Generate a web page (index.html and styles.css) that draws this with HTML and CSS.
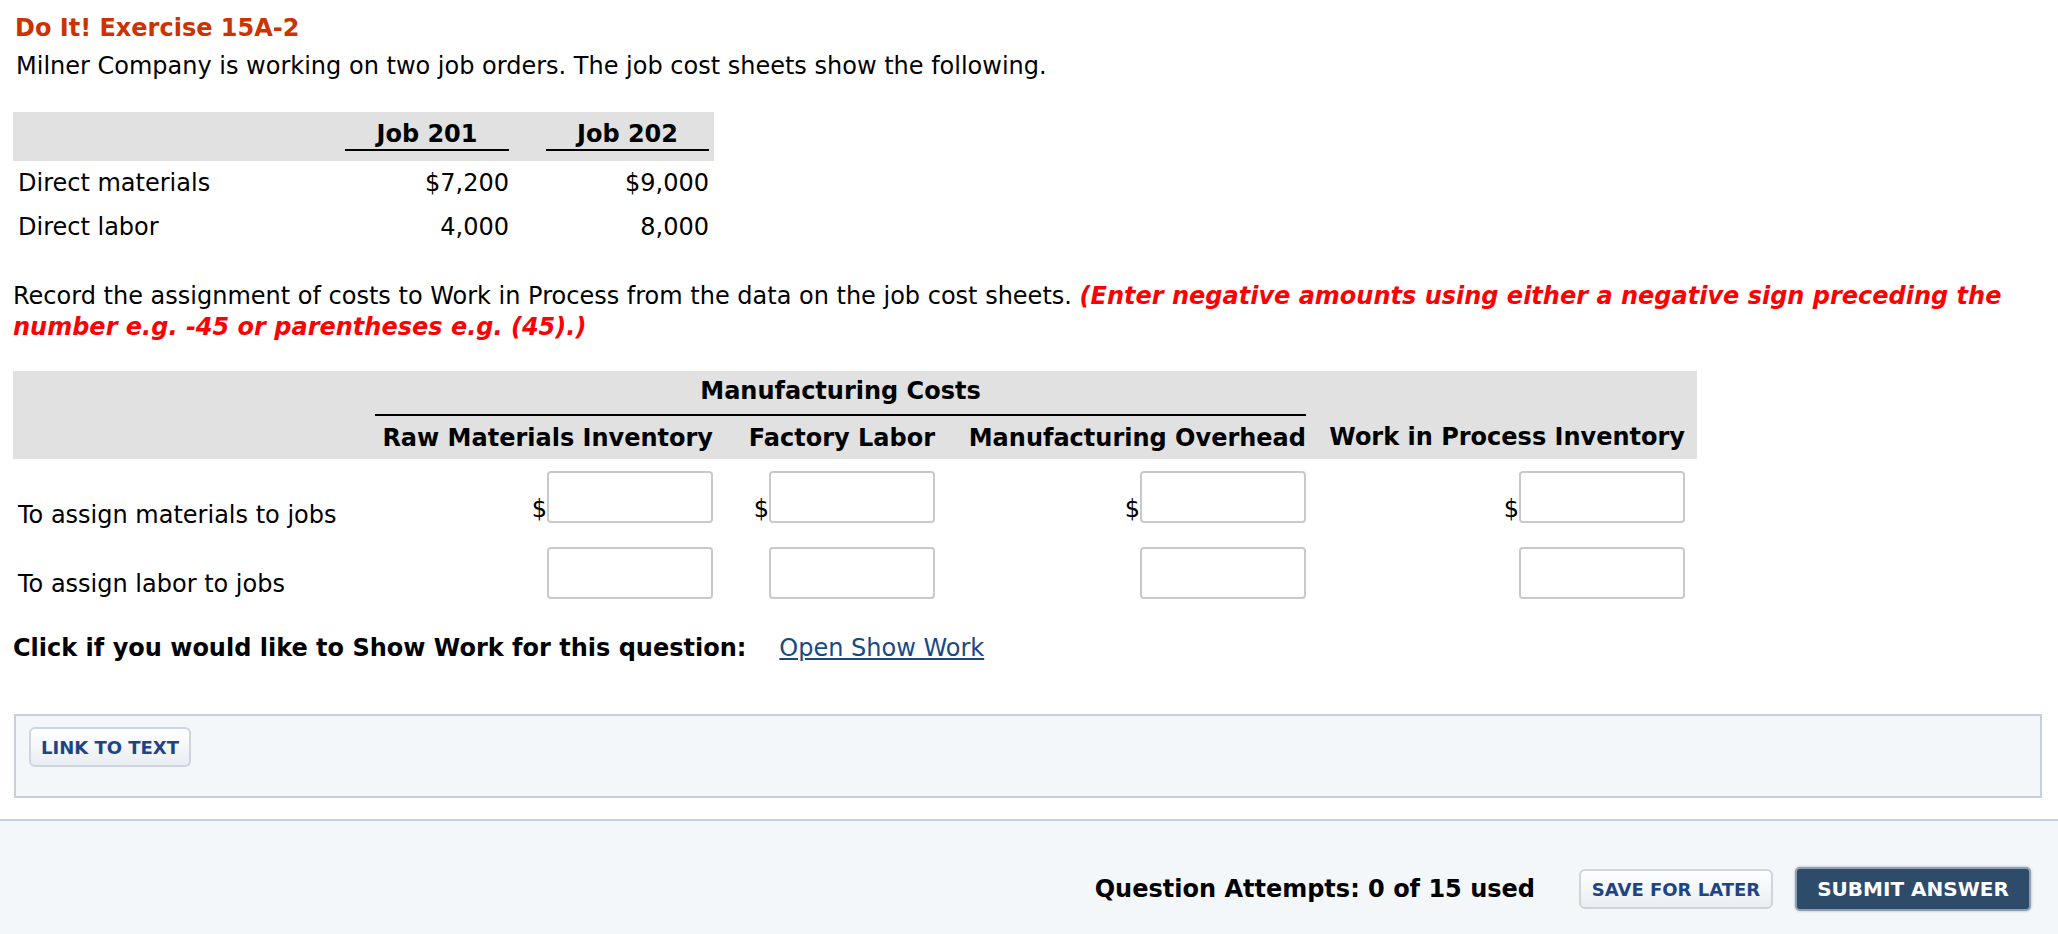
FILE: index.html
```html
<!DOCTYPE html>
<html lang="en">
<head>
<meta charset="utf-8">
<title>Do It! Exercise 15A-2</title>
<link rel="stylesheet" href="styles.css">
</head>
<body>
<div class="page">
  <h1 class="title">Do It! Exercise 15A-2</h1>
  <p class="intro">Milner Company is working on two job orders. The job cost sheets show the following.</p>

  <table class="jobs">
    <colgroup>
      <col class="c-lbl"><col class="c-j1"><col class="c-gap"><col class="c-j2"><col class="c-end">
    </colgroup>
    <thead>
      <tr class="hrow">
        <th></th>
        <th><div class="uline">Job 201</div></th>
        <th></th>
        <th><div class="uline">Job 202</div></th>
        <th></th>
      </tr>
    </thead>
    <tbody>
      <tr>
        <td class="lbl">Direct materials</td>
        <td class="num">$7,200</td>
        <td></td>
        <td class="num">$9,000</td>
        <td></td>
      </tr>
      <tr>
        <td class="lbl">Direct labor</td>
        <td class="num">4,000</td>
        <td></td>
        <td class="num">8,000</td>
        <td></td>
      </tr>
    </tbody>
  </table>

  <p class="instr">Record the assignment of costs to Work in Process from the data on the job cost sheets. <em class="warn">(Enter negative amounts using either a negative sign preceding the number e.g. -45 or parentheses e.g. (45).)</em></p>

  <table class="mfg">
    <colgroup>
      <col class="m-lbl"><col class="m-c1"><col class="m-c2"><col class="m-c3"><col class="m-c4"><col class="m-end">
    </colgroup>
    <thead>
      <tr class="grp">
        <th></th>
        <th colspan="3" class="grp-h">Manufacturing Costs</th>
        <th></th>
        <th></th>
      </tr>
      <tr class="cols">
        <th></th>
        <th>Raw Materials Inventory</th>
        <th>Factory Labor</th>
        <th>Manufacturing Overhead</th>
        <th>Work in Process Inventory</th>
        <th></th>
      </tr>
    </thead>
    <tbody>
      <tr>
        <td class="rlbl rlbl-1">To assign materials to jobs</td>
        <td class="cell"><div class="money"><span class="cur">$</span><input class="amt" type="text"></div></td>
        <td class="cell"><div class="money"><span class="cur">$</span><input class="amt" type="text"></div></td>
        <td class="cell"><div class="money"><span class="cur">$</span><input class="amt" type="text"></div></td>
        <td class="cell"><div class="money"><span class="cur">$</span><input class="amt" type="text"></div></td>
        <td></td>
      </tr>
      <tr>
        <td class="rlbl rlbl-2">To assign labor to jobs</td>
        <td class="cell"><div class="money"><input class="amt" type="text"></div></td>
        <td class="cell"><div class="money"><input class="amt" type="text"></div></td>
        <td class="cell"><div class="money"><input class="amt" type="text"></div></td>
        <td class="cell"><div class="money"><input class="amt" type="text"></div></td>
        <td></td>
      </tr>
    </tbody>
  </table>

  <p class="showwork"><strong>Click if you would like to Show Work for this question:</strong><a class="swlink" href="#">Open Show Work</a></p>

  <div class="linkbox">
    <button class="btn btn-light btn-link" type="button">LINK TO TEXT</button>
  </div>
</div>

<footer class="footer">
  <span class="attempts">Question Attempts: 0 of 15 used</span>
  <button class="btn btn-light btn-save" type="button">SAVE FOR LATER</button>
  <button class="btn btn-submit" type="button">SUBMIT ANSWER</button>
</footer>
</body>
</html>
```

FILE: styles.css
```css
html, body {
  margin: 0;
  padding: 0;
  background: #ffffff;
}

body {
  font-family: "DejaVu Sans", Verdana, sans-serif;
  font-size: 24px;
  line-height: 29px;
  color: #000000;
}

.page {
  padding: 14px 16px 0 13px;
}

.title {
  margin: 0;
  font-size: 24px;
  line-height: 29px;
  font-weight: bold;
  color: #cc3300;
  padding-left: 2px;
}

.intro {
  margin: 9px 0 0 0;
  padding-left: 3px;
}

/* Job table */
.jobs {
  margin-top: 31px;
  border-collapse: collapse;
  border-spacing: 0;
  table-layout: fixed;
  width: 701px;
}
.c-lbl { width: 332px; }
.c-j1 { width: 164px; }
.c-gap { width: 37px; }
.c-j2 { width: 163px; }
.c-end { width: 5px; }

.jobs .hrow th {
  background: #e1e1e1;
  padding: 8px 0 10px 0;
  font-weight: bold;
  text-align: center;
}
.uline {
  border-bottom: 2px solid #000;
  line-height: 29px;
}
.jobs td {
  height: 44px;
  padding: 0;
  vertical-align: middle;
}
.jobs .lbl {
  padding-left: 5px;
}
.jobs .num {
  text-align: right;
}

.instr {
  margin: 32px 0 0 0;
  line-height: 31px;
}
.warn {
  color: #ff0000;
  font-weight: bold;
  font-style: italic;
}

/* Manufacturing table */
.mfg {
  margin-top: 28px;
  border-collapse: collapse;
  border-spacing: 0;
  table-layout: fixed;
  width: 1684px;
}
.m-lbl { width: 362px; }
.m-c1 { width: 338px; }
.m-c2 { width: 222px; }
.m-c3 { width: 371px; }
.m-c4 { width: 379px; }
.m-end { width: 12px; }

.mfg thead th {
  background: #e1e1e1;
  font-weight: bold;
  white-space: nowrap;
}
.mfg .grp th {
  padding: 6px 0 0 0;
  height: 37px;
  vertical-align: top;
}
.mfg .grp .grp-h {
  text-align: center;
  border-bottom: 2px solid #000;
}
.mfg .cols th {
  text-align: right;
  padding: 8px 0 6px 0;
  vertical-align: top;
}

.mfg td {
  padding: 0;
}
.mfg .rlbl {
  padding: 0 0 5px 5px;
  vertical-align: bottom;
  white-space: nowrap;
}
.mfg .rlbl-2 {
  padding-bottom: 12px;
}
.mfg .cell {
  padding: 12px 0;
  vertical-align: top;
}
.money {
  display: flex;
  justify-content: flex-end;
  align-items: flex-end;
}
.cur {
  line-height: 22px;
  margin-bottom: 3px;
}
.amt {
  box-sizing: border-box;
  width: 166px;
  height: 52px;
  margin: 0;
  border: 2px solid #c9c9c9;
  border-radius: 4px;
  background: #fff;
  font-family: inherit;
  font-size: 21px;
  padding: 0 6px;
}

.showwork {
  margin: 23px 0 0 0;
}
.swlink {
  margin-left: 33px;
  color: #174a85;
  text-decoration: underline;
}

/* Link box */
.linkbox {
  margin: 51px 0 0 1px;
  border: 2px solid #c7d0dc;
  background: #f4f7fa;
  padding: 11px 13px 29px 13px;
}

.btn {
  font-family: "DejaVu Sans", Verdana, sans-serif;
  font-weight: bold;
  cursor: pointer;
  box-sizing: border-box;
}
.btn-light {
  background: linear-gradient(#ffffff, #e9edf2);
  border: 2px solid #ccd5e0;
  border-radius: 6px;
  color: #1e4486;
}
.btn-link {
  width: 162px;
  height: 40px;
  font-size: 18px;
  padding: 0;
}

/* Footer */
.footer {
  margin-top: 21px;
  border-top: 2px solid #c6d0dc;
  background: #f4f7fa;
  display: flex;
  justify-content: flex-end;
  align-items: flex-start;
  padding: 46px 27px 0 0;
  box-sizing: border-box;
  height: 120px;
}
.attempts {
  font-weight: bold;
  font-size: 24px;
  line-height: 44px;
  margin-right: 44px;
}
.btn-save {
  margin-top: 2px;
  width: 194px;
  height: 40px;
  font-size: 18px;
  padding: 0;
  margin-right: 22px;
}
.btn-submit {
  width: 236px;
  height: 44px;
  font-size: 20px;
  padding: 0;
  color: #ffffff;
  background: #2e4b6a;
  border: 2px solid #8e9db0;
  border-radius: 5px;
  box-shadow: 0 0 3px rgba(120, 140, 165, 0.6);
}
```
